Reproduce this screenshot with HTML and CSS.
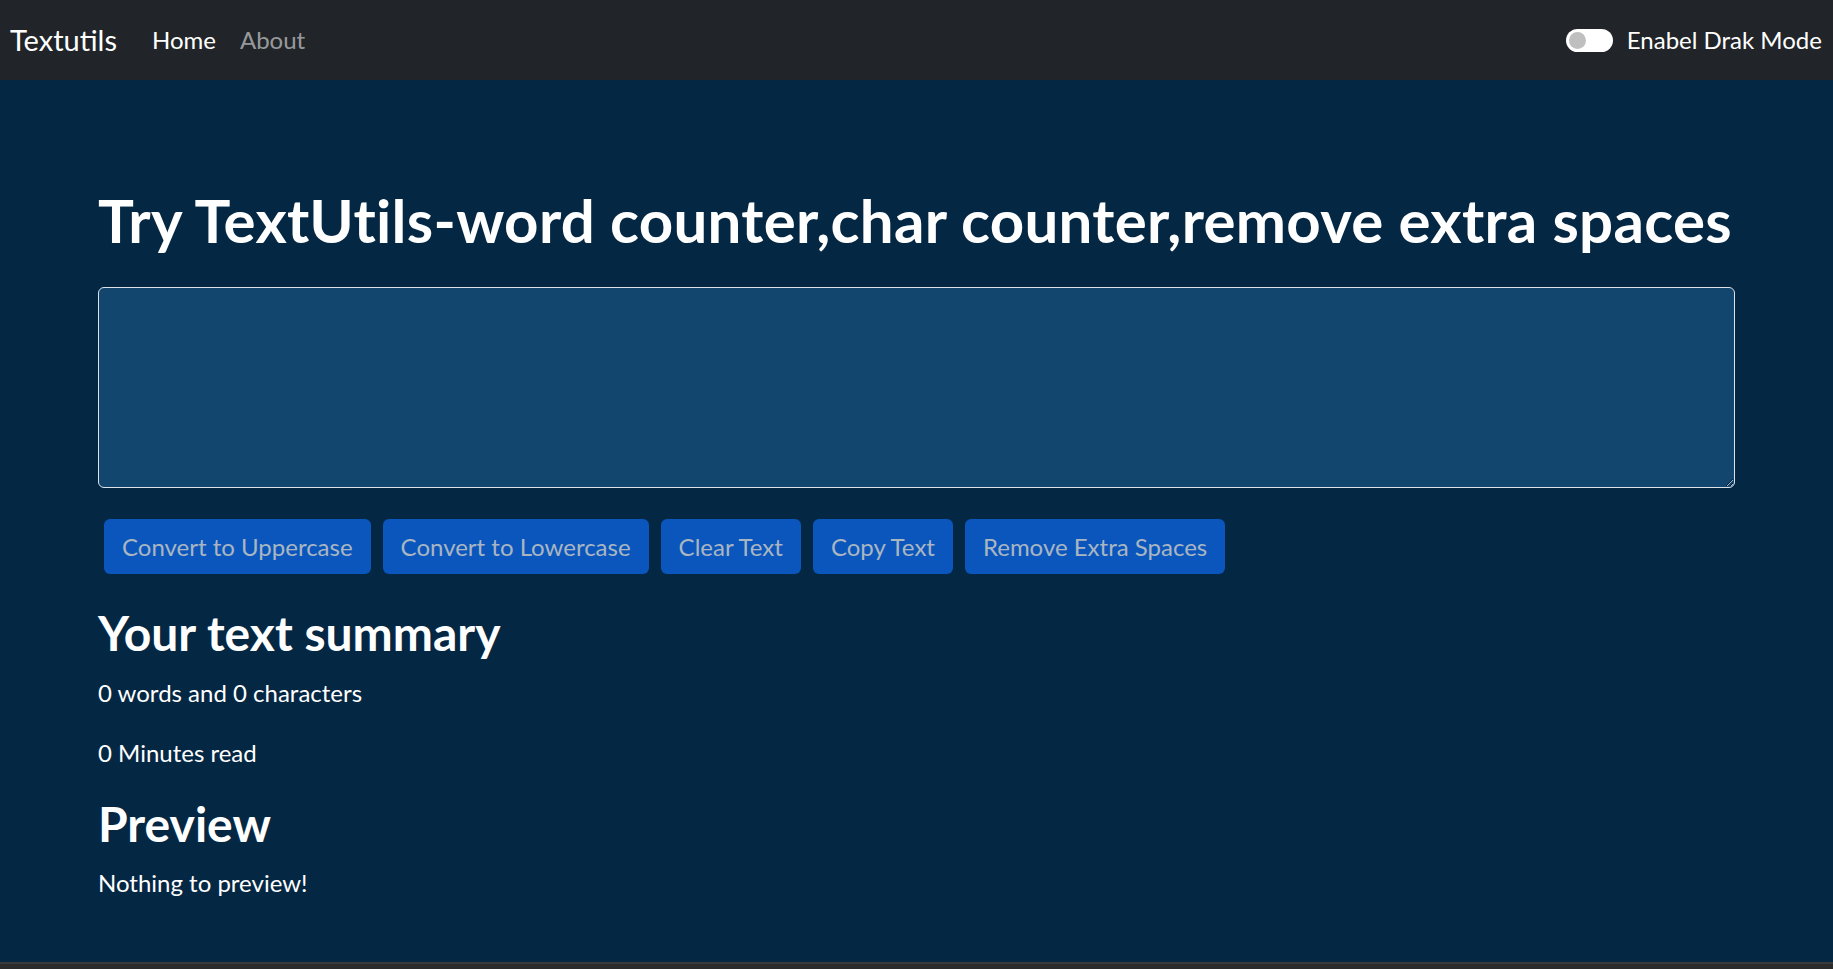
FILE: index.html
```html
<!DOCTYPE html>
<html lang="en">
<head>
<meta charset="utf-8">
<title>TextUtils</title>
<link rel="stylesheet" href="styles.css">
</head>
<body>
<div class="page">
  <nav class="navbar">
    <div class="nav-left">
      <a class="brand" href="#">Textutils</a>
      <ul class="nav-links">
        <li><a class="nav-link active" href="#">Home</a></li>
        <li><a class="nav-link" href="#">About</a></li>
      </ul>
    </div>
    <label class="switch">
      <span class="switch-track"><span class="switch-knob"></span></span>
      <span class="switch-label">Enabel Drak Mode</span>
    </label>
  </nav>
  <main class="main">
    <div class="container">
      <h1 class="title">Try TextUtils-word counter,char counter,remove extra spaces</h1>
      <textarea class="textbox" rows="8"></textarea>
      <div class="actions">
        <button class="btn" disabled>Convert to Uppercase</button>
        <button class="btn" disabled>Convert to Lowercase</button>
        <button class="btn" disabled>Clear Text</button>
        <button class="btn" disabled>Copy Text</button>
        <button class="btn" disabled>Remove Extra Spaces</button>
      </div>
      <h2 class="subtitle">Your text summary</h2>
      <p class="text">0 words and 0 characters</p>
      <p class="text">0 Minutes read</p>
      <h2 class="subtitle preview">Preview</h2>
      <p class="text">Nothing to preview!</p>
    </div>
  </main>
  <div class="hbar"></div>
</div>
</body>
</html>
```
FILE: styles.css
```css
* { box-sizing: border-box; }
html, body { margin: 0; padding: 0; }
body {
  font-family: "Lato", "Open Sans", sans-serif;
  font-size: 24px;
  line-height: 1.5;
  color: #fff;
  background: #042743;
}
.page {
  display: flex;
  flex-direction: column;
  height: 100vh;
}
.navbar {
  height: 80px;
  flex: none;
  background: #212529;
  display: flex;
  align-items: center;
  justify-content: space-between;
  padding: 0 11px 0 10px;
}
.nav-left { display: flex; align-items: center; }
.brand {
  color: #fff;
  text-decoration: none;
  font-size: 29px;
  margin-right: 23px;
}
.nav-links {
  list-style: none;
  margin: 0;
  padding: 0;
  display: flex;
}
.nav-link {
  display: block;
  padding: 8px 12px;
  color: rgba(255,255,255,.55);
  text-decoration: none;
  font-size: 24px;
}
.nav-link.active { color: #fff; }
.switch { display: flex; align-items: center; }
.switch-track {
  width: 47px;
  height: 23px;
  border-radius: 12px;
  background: #fff;
  display: flex;
  align-items: center;
  padding-left: 3px;
}
.switch-knob {
  width: 17px;
  height: 17px;
  border-radius: 50%;
  background: #bfbfbf;
}
.switch-label { margin-left: 14px; font-size: 24px; }
.main { flex: 1; }
.container {
  width: 1637px;
  margin: 0 auto;
  padding-top: 104px;
}
.title {
  margin: 0 0 31px;
  font-size: 60px;
  font-weight: 700;
  line-height: 1.2;
  letter-spacing: 0.3px;
  white-space: nowrap;
}
.textbox {
  display: block;
  width: 100%;
  height: 201px;
  background: #13466e;
  border: 1.5px solid #dee2e6;
  border-radius: 6px;
  color: #fff;
  font: inherit;
  padding: 9px 18px;
  resize: vertical;
}
.actions {
  display: flex;
  gap: 12px;
  padding: 31px 6px 0;
}
.btn {
  font-family: inherit;
  font-size: 24px;
  line-height: 36px;
  padding: 9px 18px;
  height: 55px;
  border: 0;
  border-radius: 6px;
  background: #0b56bd;
  color: #a9b6c2;
}
.subtitle {
  margin: 30px 0 13px;
  font-size: 48px;
  font-weight: 700;
  line-height: 1.2;
}
.subtitle.preview { margin-top: 24px; }
.text { margin: 0 0 24px; }
.hbar {
  height: 7px;
  flex: none;
  background: #2b2b2b;
  border-top: 2px solid #3a3a3a;
}
```
